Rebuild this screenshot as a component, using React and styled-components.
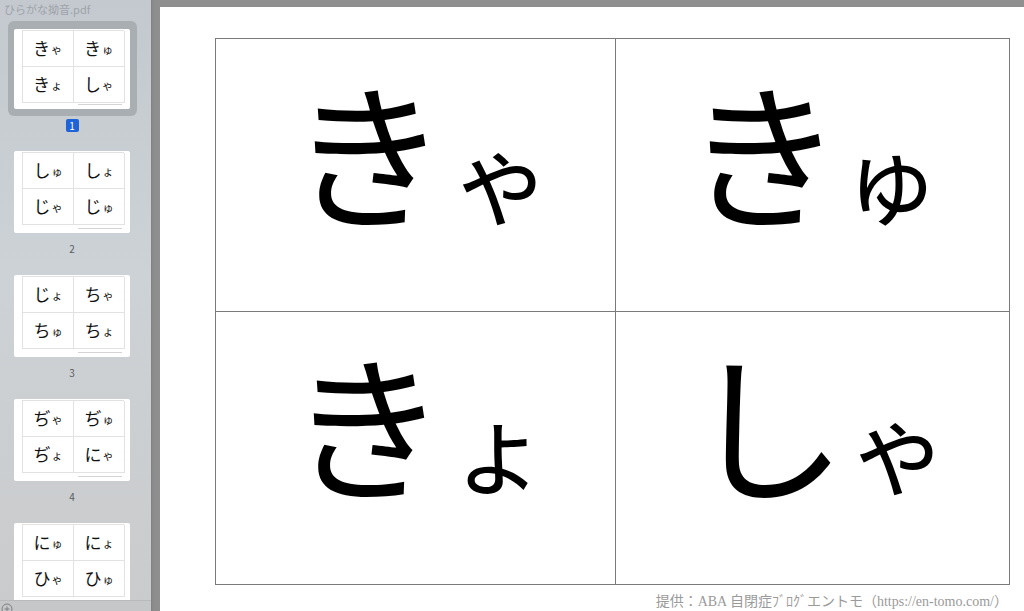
import React from 'react'
import styled, { createGlobalStyle } from 'styled-components'

const GlobalStyle = createGlobalStyle`
  html, body {
    margin: 0;
    padding: 0;
    width: 1024px;
    height: 611px;
    overflow: hidden;
    font-family: "Noto Sans CJK JP", "Noto Sans", sans-serif;
  }
`

const Window = styled.div`
  display: flex;
  width: 1024px;
  height: 611px;
  overflow: hidden;
`

const Sidebar = styled.aside`
  width: 151px;
  flex-shrink: 0;
  display: flex;
  flex-direction: column;
  background: linear-gradient(180deg, #c4c9cf 0%, #cdd2d6 45%, #cacbcc 100%);
  overflow: hidden;
`

const FileName = styled.div`
  height: 18px;
  padding: 1px 0 0 4px;
  font-size: 11px;
  line-height: 16px;
  color: #9ea3a9;
  white-space: nowrap;
`

const ThumbList = styled.div`
  flex: 1;
  min-height: 0;
  display: flex;
  flex-direction: column;
  align-items: center;
  padding-top: 2px;
  overflow: hidden;
`

const ThumbItem = styled.div`
  display: flex;
  flex-direction: column;
  align-items: center;
  height: 124px;
  flex-shrink: 0;
  margin-right: 7px;
`

const ThumbFrame = styled.div`
  padding: ${p => (p.$selected ? '8px 7px 7px 6px' : '0')};
  margin-top: ${p => (p.$selected ? '0' : '6px')};
  border-radius: 6px;
  background: ${p => (p.$selected ? '#a9aeb3' : 'transparent')};
`

const ThumbPage = styled.div`
  position: relative;
  width: 116px;
  height: ${p => (p.$selected ? 80 : 82)}px;
  background: #fff;
  border-radius: 2px;
  box-sizing: border-box;
  padding: 1px 6px 0 8px;
`

const ThumbGrid = styled.div`
  display: grid;
  grid-template-columns: 51px 51px;
  grid-template-rows: 36px 36px;
  border-left: 1px solid #e2e2e2;
  border-top: 1px solid #e2e2e2;
`

const ThumbCell = styled.div`
  display: flex;
  align-items: center;
  justify-content: center;
  border-right: 1px solid #e2e2e2;
  border-bottom: 1px solid #e2e2e2;
  padding-bottom: 2px;
  color: #111;
`

const ThumbCredit = styled.div`
  position: absolute;
  right: 8px;
  bottom: 4px;
  width: 44px;
  height: 1px;
  background: #d4d4d4;
`

const PageLabel = styled.div`
  margin-top: ${p => (p.$selected ? '3px' : '9px')};
  min-width: 9px;
  height: 13px;
  padding: 0 2px;
  border-radius: 2px;
  font-size: 10px;
  line-height: 13px;
  text-align: center;
  color: ${p => (p.$selected ? '#fff' : '#5a5d61')};
  background: ${p => (p.$selected ? '#1f63d8' : 'transparent')};
`

const BottomBar = styled.div`
  position: relative;
  height: 10px;
  flex-shrink: 0;
  background: #c6c7c8;
  border-top: 1px solid #b8b9ba;
  overflow: hidden;
`

const AddIcon = styled.svg`
  position: absolute;
  left: 1px;
  top: 2px;
`

const Divider = styled.div`
  width: 9px;
  flex-shrink: 0;
  background: linear-gradient(90deg, #7f7f7f 0, #8c8c8c 2px, #8f8f8f 100%);
`

const Viewer = styled.main`
  flex: 1;
  background: #8f8f8f;
  padding-top: 7px;
  overflow: hidden;
`

const Page = styled.div`
  width: 900px;
  height: 620px;
  background: #fff;
  box-sizing: border-box;
  padding: 31px 0 0 55px;
`

const Sheet = styled.div`
  display: flex;
  flex-direction: column;
  width: 795px;
`

const Grid = styled.div`
  display: grid;
  grid-template-columns: 400px 394px;
  grid-template-rows: 273px 273px;
  border-left: 1px solid #7a7a7a;
  border-top: 1px solid #7a7a7a;
`

const Cell = styled.div`
  display: flex;
  align-items: center;
  justify-content: center;
  border-right: 1px solid #7a7a7a;
  border-bottom: 1px solid #7a7a7a;
  padding: 0 0 ${p => p.$lift}px ${p => p.$shift}px;
  box-sizing: border-box;
  color: #000;
`

const Syllable = styled.div`
  display: flex;
  align-items: flex-end;
  line-height: 1;
`

const Big = styled.span`
  font-size: ${p => p.$size}px;
`

const Small = styled.span`
  font-size: ${p => p.$size}px;
  margin-left: ${p => p.$gap}px;
  margin-bottom: ${p => p.$drop}px;
`

const Credit = styled.div`
  margin-top: 5px;
  padding-right: 2px;
  text-align: right;
  font-family: "Liberation Serif", "Noto Sans CJK JP", serif;
  font-size: 14px;
  color: #9a9a9a;
  white-space: nowrap;
`

const thumbs = [
  ['きゃ', 'きゅ', 'きょ', 'しゃ'],
  ['しゅ', 'しょ', 'じゃ', 'じゅ'],
  ['じょ', 'ちゃ', 'ちゅ', 'ちょ'],
  ['ぢゃ', 'ぢゅ', 'ぢょ', 'にゃ'],
  ['にゅ', 'にょ', 'ひゃ', 'ひゅ'],
]

const cells = [
  { text: 'きゃ', lift: 53, drop: 4, shift: 10, gap: 4 },
  { text: 'きゅ', lift: 53, drop: 4, shift: 0, gap: -2 },
  { text: 'きょ', lift: 55, drop: 6, shift: 6, gap: 2 },
  { text: 'しゃ', lift: 55, drop: 6, shift: 12, gap: 2 },
]

const Kana = ({ text, big, small, gap, drop }) => (
  <Syllable>
    <Big $size={big}>{text[0]}</Big>
    <Small $size={small} $gap={gap} $drop={drop}>{text[1]}</Small>
  </Syllable>
)

export default function App() {
  return (
    <>
      <GlobalStyle />
      <Window>
        <Sidebar>
          <FileName>ひらがな拗音.pdf</FileName>
          <ThumbList>
            {thumbs.map((page, i) => (
              <ThumbItem key={i}>
                <ThumbFrame $selected={i === 0}>
                  <ThumbPage $selected={i === 0}>
                    <ThumbGrid>
                      {page.map(k => (
                        <ThumbCell key={k}>
                          <Kana text={k} big={17} small={11} gap={1} drop={1} />
                        </ThumbCell>
                      ))}
                    </ThumbGrid>
                    <ThumbCredit />
                  </ThumbPage>
                </ThumbFrame>
                <PageLabel $selected={i === 0}>{i + 1}</PageLabel>
              </ThumbItem>
            ))}
          </ThumbList>
          <BottomBar>
            <AddIcon width="12" height="12" viewBox="0 0 12 12">
              <circle cx="6" cy="6" r="5" fill="none" stroke="#7d7f82" strokeWidth="1" />
              <path d="M6 3.5v5M3.5 6h5" stroke="#7d7f82" strokeWidth="1" />
            </AddIcon>
          </BottomBar>
        </Sidebar>
        <Divider />
        <Viewer>
          <Page>
            <Sheet>
              <Grid>
                {cells.map(c => (
                  <Cell key={c.text} $lift={c.lift} $shift={c.shift}>
                    <Kana text={c.text} big={158} small={100} gap={c.gap} drop={c.drop} />
                  </Cell>
                ))}
              </Grid>
              <Credit>提供：ABA 自閉症ﾌﾞﾛｸﾞエントモ（https://en-tomo.com/）</Credit>
            </Sheet>
          </Page>
        </Viewer>
      </Window>
    </>
  )
}
